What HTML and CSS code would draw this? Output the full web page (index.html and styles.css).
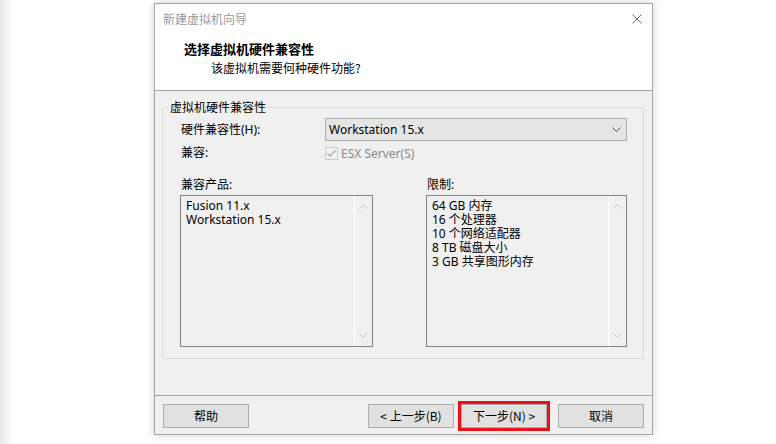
FILE: index.html
```html
<!DOCTYPE html>
<html lang="zh-CN">
<head>
<meta charset="utf-8">
<title>新建虚拟机向导</title>
<link rel="stylesheet" href="styles.css">
</head>
<body>
<div class="desktop">
  <div class="window">
    <div class="top">
      <div class="titlebar">
        <span class="wtitle">新建虚拟机向导</span>
        <svg class="close" width="10" height="10" viewBox="0 0 10 10"><path d="M0.5 0.5L9.5 9.5M9.5 0.5L0.5 9.5" stroke="#707070" stroke-width="1" fill="none"/></svg>
      </div>
      <div class="head">
        <div class="h1">选择虚拟机硬件兼容性</div>
        <div class="h2">该虚拟机需要何种硬件功能?</div>
      </div>
    </div>
    <div class="body">
      <fieldset class="group">
        <legend>虚拟机硬件兼容性</legend>
        <div class="form">
          <span class="lbl">硬件兼容性(H):</span>
          <div class="select">
            <span>Workstation 15.x</span>
            <svg width="9" height="5" viewBox="0 0 9 5"><path d="M0.5 0.5L4.5 4.5L8.5 0.5" stroke="#505050" stroke-width="1" fill="none"/></svg>
          </div>
          <span class="lbl">兼容:</span>
          <div class="check">
            <svg width="13" height="13" viewBox="0 0 13 13"><rect x="0.5" y="0.5" width="12" height="12" fill="#f0f0f0" stroke="#cccccc"/><path d="M2.5 6.5L5 9L10.5 3.5" stroke="#a9a9a9" stroke-width="1.2" fill="none"/></svg>
            <span class="dis">ESX Server(S)</span>
          </div>
        </div>
        <div class="lists">
          <div class="col">
            <span class="lbl cap">兼容产品:</span>
            <div class="listbox">
              <div class="items">
                <div>Fusion 11.x</div>
                <div>Workstation 15.x</div>
              </div>
              <div class="sbar">
                <svg width="9" height="5" viewBox="0 0 9 5"><path d="M0.5 4.5L4.5 0.5L8.5 4.5" stroke="#c6c6c6" stroke-width="1" fill="none"/></svg>
                <svg width="9" height="5" viewBox="0 0 9 5"><path d="M0.5 0.5L4.5 4.5L8.5 0.5" stroke="#c6c6c6" stroke-width="1" fill="none"/></svg>
              </div>
            </div>
          </div>
          <div class="col">
            <span class="lbl cap">限制:</span>
            <div class="listbox">
              <div class="items">
                <div>64 GB 内存</div>
                <div>16 个处理器</div>
                <div>10 个网络适配器</div>
                <div>8 TB 磁盘大小</div>
                <div>3 GB 共享图形内存</div>
              </div>
              <div class="sbar">
                <svg width="9" height="5" viewBox="0 0 9 5"><path d="M0.5 4.5L4.5 0.5L8.5 4.5" stroke="#c6c6c6" stroke-width="1" fill="none"/></svg>
                <svg width="9" height="5" viewBox="0 0 9 5"><path d="M0.5 0.5L4.5 4.5L8.5 0.5" stroke="#c6c6c6" stroke-width="1" fill="none"/></svg>
              </div>
            </div>
          </div>
        </div>
      </fieldset>
    </div>
    <div class="footer">
      <button class="btn">帮助</button>
      <span class="spacer"></span>
      <button class="btn">&lt; 上一步(B)</button>
      <button class="btn next">下一步(N) &gt;</button>
      <button class="btn">取消</button>
    </div>
  </div>
</div>
</body>
</html>
```
FILE: styles.css
```css
* { box-sizing: border-box; }
html, body { margin: 0; padding: 0; }
body {
  width: 776px;
  height: 444px;
  overflow: hidden;
  background: linear-gradient(to right, #e4e4e4 0px, #f3f3f3 6px, #ffffff 14px);
  font-family: "Noto Sans", "Noto Sans CJK SC", sans-serif;
  font-size: 12px;
  color: #000;
}
.desktop {
  padding: 3px 0 0 154px;
}
.window {
  width: 499px;
  height: 432px;
  border: 1px solid #a6a6a6;
  background: #f0f0f0;
  box-shadow: 0 0 9px rgba(0, 0, 0, 0.18);
  display: flex;
  flex-direction: column;
}
.top {
  background: #fff;
  height: 87px;
  border-bottom: 1px solid #a0a0a0;
  flex: none;
}
.titlebar {
  height: 30px;
  display: flex;
  align-items: center;
  justify-content: space-between;
  padding: 0 10px 0 8px;
}
.wtitle {
  color: #9a9a9a;
  font-family: "Noto Sans CJK SC", sans-serif;
  font-size: 12px;
  line-height: 16px;
}
.close { display: block; margin-top: -1px; }
.head {
  padding: 6px 0 0 29px;
}
.h1 {
  font-family: "Noto Sans CJK SC", sans-serif;
  font-weight: bold;
  font-size: 13px;
  line-height: 18px;
}
.h2 {
  font-family: "Noto Sans CJK SC", sans-serif;
  font-size: 12px;
  line-height: 18px;
  padding-left: 27px;
  margin-top: 1px;
}
.body {
  flex: 1;
  padding: 8px 8px 0 7px;
}
.group {
  margin: 0;
  padding: 0;
  border: 1px solid #dcdcdc;
  height: 260px;
  min-width: 0;
}
.group legend {
  margin-left: 5px;
  padding: 0 2px;
  font-family: "Noto Sans CJK SC", sans-serif;
  line-height: 16px;
}
.form {
  display: grid;
  grid-template-columns: 144px 302px;
  grid-template-rows: 23px 24px;
  align-items: center;
  padding: 3px 0 0 18px;
}
.lbl {
  font-family: "Noto Sans", "Noto Sans CJK SC", sans-serif;
  line-height: 16px;
}
.select {
  height: 23px;
  background: #e5e5e5;
  border: 1px solid #adadad;
  display: flex;
  align-items: center;
  justify-content: space-between;
  padding: 0 5px 0 3px;
}
.select svg { display: block; }
.check {
  display: flex;
  align-items: center;
  gap: 3px;
  margin-top: 1px;
}
.check svg { display: block; }
.dis { color: #8a8a8a; }
.lists {
  display: grid;
  grid-template-columns: 193px 201px;
  column-gap: 53px;
  padding: 12px 0 0 17px;
}
.col {
  display: flex;
  flex-direction: column;
}
.cap { padding-left: 1px; margin-bottom: 2px; }
.listbox {
  height: 152px;
  border: 1px solid #828282;
  background: #f0f0f0;
  display: flex;
}
.items {
  flex: 1;
  padding: 3px 0 0 5px;
  line-height: 14px;
}
.sbar {
  width: 18px;
  border-left: 1px solid #ffffff;
  display: flex;
  flex-direction: column;
  justify-content: space-between;
  align-items: center;
  padding: 8px 0 8px 0;
}
.sbar svg { display: block; }
.footer {
  flex: none;
  height: 39px;
  border-top: 1px solid #a0a0a0;
  display: flex;
  align-items: flex-start;
  padding: 8px 8px 0 8px;
}
.spacer { flex: 1; }
.btn {
  width: 86px;
  height: 24px;
  margin: 0;
  padding: 0;
  background: #e1e1e1;
  border: 1px solid #adadad;
  border-radius: 0;
  font-family: "Noto Sans CJK SC", sans-serif;
  font-size: 12px;
  color: #000;
  line-height: 16px;
}
.next {
  margin-left: 7px;
  margin-right: 11px;
  outline: 3px solid #e8111b;
  outline-offset: 0;
}
```
